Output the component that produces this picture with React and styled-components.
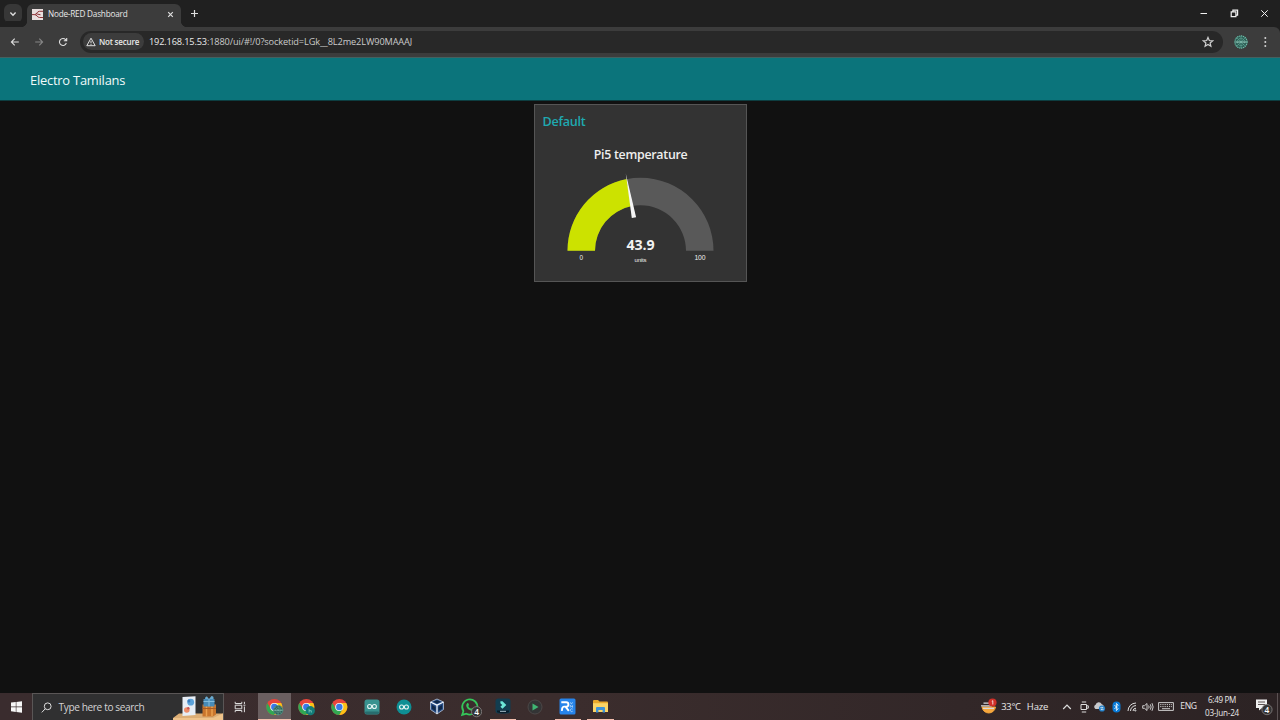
import React from 'react';
import styled, { createGlobalStyle } from 'styled-components';

const Global = createGlobalStyle`
  * { box-sizing: border-box; }
  html, body { margin: 0; background: #111; overflow: hidden; }
  body { font-family: "Open Sans", "Noto Sans", sans-serif; color: #e6e6e6; }
  svg { display: block; flex: none; }
`;

const Screen = styled.div`
  width: 1280px;
  height: 720px;
  display: flex;
  flex-direction: column;
  background: #111111;
`;

const Label = styled.span`
  font-size: ${p => p.$size || 9}px;
  font-weight: ${p => p.$weight || 400};
  letter-spacing: ${p => p.$track || 0}px;
  color: ${p => p.$color || '#e8e8e8'};
  line-height: 1.2;
  white-space: pre;
`;

/* Browser chrome */
const TabStrip = styled.div`
  height: 27px;
  flex: none;
  display: flex;
  align-items: flex-start;
  background: #202020;
`;
const TabSearch = styled.div`
  width: 18px;
  height: 19px;
  margin: 4px 5px 0 4px;
  border-radius: 6px;
  background: #373737;
  display: grid;
  place-items: center;
`;
const Tab = styled.div`
  position: relative;
  width: 154px;
  height: 23px;
  margin-top: 4px;
  padding: 0 7px 3px 5px;
  border-radius: 6px 6px 0 0;
  background: #3c3c3c;
  display: flex;
  align-items: center;
  gap: 5px;
  &::before, &::after {
    content: "";
    position: absolute;
    bottom: 0;
    width: 5px;
    height: 5px;
  }
  &::before { left: -5px; background: radial-gradient(circle at 0 0, transparent 4.6px, #3c3c3c 5px); }
  &::after { right: -5px; background: radial-gradient(circle at 100% 0, transparent 4.6px, #3c3c3c 5px); }
`;
const TabTitle = styled(Label)`
  flex: 1;
`;
const NewTab = styled.div`
  margin: 9px 0 0 9px;
`;
const WindowControls = styled.div`
  margin: 9px 11px 0 auto;
  display: flex;
  gap: 21.5px;
`;
const Toolbar = styled.div`
  height: 31px;
  flex: none;
  display: flex;
  align-items: center;
  padding: 0 10px 1px 10px;
  background: #3c3c3c;
  border-bottom: 1px solid #45605f;
  border-top-right-radius: 6px;
  box-shadow: 6px -6px 0 0 #202020;
`;
const ToolbarIcons = styled.div`
  display: flex;
  gap: 14px;
  width: 70px;
`;
const AddressBar = styled.div`
  width: 1144px;
  height: 22px;
  padding: 0 9px 0 3px;
  border-radius: 11px;
  background: #282828;
  display: flex;
  align-items: center;
`;
const Chip = styled.div`
  width: 61px;
  height: 17px;
  padding-left: 3px;
  margin-right: 5px;
  border-radius: 9px;
  background: #3c3c3c;
  display: flex;
  align-items: center;
  gap: 3px;
`;
const Url = styled.div`
  flex: 1;
  display: flex;
  align-items: center;
`;
const ToolbarEnd = styled.div`
  display: flex;
  align-items: center;
  margin-left: 11px;
  gap: 12px;
`;

/* Dashboard */
const Header = styled.header`
  height: 42px;
  flex: none;
  padding: 4px 0 0 30px;
  display: flex;
  align-items: center;
  background: #0b747b;
`;
const Main = styled.main`
  flex: 1;
  display: flex;
  justify-content: center;
  align-items: flex-start;
  padding: 4px 0 0 1px;
  border-top: 1px solid #0d3d40;
  background: #111111;
`;
const Card = styled.section`
  width: 213px;
  height: 178px;
  margin-top: -1px;
  border: 1px solid #555555;
  background: #333333;
`;
const CardTitle = styled.h2`
  margin: 0;
  height: 32px;
  padding: 8px 0 0 7.5px;
  font-size: 12.6px;
  line-height: 17px;
  font-weight: 600;
  letter-spacing: -0.25px;
  color: #1fa9b0;
`;

/* Taskbar */
const Taskbar = styled.footer`
  height: 27px;
  flex: none;
  display: flex;
  align-items: center;
  background: linear-gradient(90deg, #3a2c2e 0%, #3b2d2d 45%, #322728 75%, #2c2324 100%);
`;
const Slot = styled.div`
  width: ${p => p.$w}px;
  height: 27px;
  flex: none;
  display: flex;
  align-items: center;
  justify-content: center;
`;
const SearchBox = styled.div`
  width: 192px;
  height: 27px;
  flex: none;
  padding-left: 8px;
  border: 1px solid #5a5656;
  border-bottom: 0;
  background: #303031;
  display: flex;
  align-items: center;
  gap: 6.5px;
`;
const SearchText = styled(Label)`
  flex: 1;
`;
const TaskViewSlot = styled(Slot)`
  padding-right: 2px;
`;
const AppSlot = styled(Slot)`
  position: relative;
  background: ${p => (p.$active ? '#6a5f60' : 'transparent')};
  &::after {
    content: "";
    display: ${p => (p.$running ? 'block' : 'none')};
    position: absolute;
    bottom: 0;
    left: ${p => (p.$active ? 0 : 3)}px;
    right: ${p => (p.$active ? 0 : 3)}px;
    height: 1.5px;
    background: #f3bfae;
  }
`;
const Tray = styled.div`
  margin-left: auto;
  display: flex;
  align-items: center;
`;
const Clock = styled(Slot)`
  flex-direction: column;
  gap: 3px;
`;
const Divider = styled.div`
  width: 1px;
  height: 27px;
  margin-right: 2px;
  background: #5b5253;
`;

const Stroke = ({ w = 10, h = w, box = `0 0 ${w} ${h}`, color = '#dedede', sw = 1.1, children }) => (
  <svg width={w} height={h} viewBox={box} fill="none" stroke={color} strokeWidth={sw}>{children}</svg>
);

const Gauge = () => (
  <svg width="211" height="144" viewBox="535 137 211 144" fontFamily='"Open Sans", "Noto Sans", sans-serif' textAnchor="middle">
    <text x="640.7" y="159.4" fontSize="12.4" fontWeight="600" fill="#eeeeee" textLength="94">Pi5 temperature</text>
    <path d="M567.5 250.8A73 73 0 0 1 713.5 250.8H686A45.5 45.5 0 0 0 595 250.8Z" fill="#595959" />
    <path d="M567.5 250.8A73 73 0 0 1 626.6 179.1L631.8 206.1A45.5 45.5 0 0 0 595 250.8Z" fill="#cce200" />
    <path d="M625.8 173.5L631.8 218.1L636.1 217.3Z" fill="#f5f5f5" />
    <text x="640.5" y="249.5" fontSize="14.2" fontWeight="700" fill="#f2f2f2" textLength="28">43.9</text>
    <g fontFamily='"Liberation Sans", Arial, sans-serif' fill="#eeeeee">
      <text x="640.5" y="261.6" fontSize="6" textLength="12">units</text>
      <text x="581.4" y="260.3" fontSize="6.4">0</text>
      <text x="700" y="260.3" fontSize="6.8" textLength="11">100</text>
    </g>
  </svg>
);

const Mesh = ({ r }) => (
  <g transform={`scale(${r / 7})`}>
    <circle cx="7" cy="7" r="6.6" fill="#2f5e56" />
    <circle cx="7" cy="7" r="6.1" fill="none" stroke="#72bda9" strokeWidth="1.1" strokeDasharray="1.3 .7" />
    <circle cx="7" cy="7" r="3.6" fill="none" stroke="#66ad9a" strokeWidth="1" strokeDasharray="1.2 .8" />
    <path d="M7 1V13M2.8 2.8L11.2 11.2M11.2 2.8L2.8 11.2" stroke="#5fa997" strokeWidth=".6" />
    <path d="M1.5 7H12.5" stroke="#9bd0c1" strokeWidth="1" />
  </g>
);

const ChromeIcon = ({ badge }) => (
  <svg width="19" height="18" viewBox="0 0 19 18">
    <circle cx="9.3" cy="9" r="8" fill="#e8453c" />
    <path d="M2.37 5A8 8 0 0 0 9.3 17L12.8 11 9.3 9 5.8 11Z" fill="#32a852" />
    <path d="M9.3 5H16.23A8 8 0 0 1 9.3 17L12.8 11Z" fill="#fbc116" />
    <circle cx="9.3" cy="9" r="4.1" fill="#f5f5f5" />
    <circle cx="9.3" cy="9" r="3.2" fill="#3979e8" />
    {badge === 'mesh' && <g transform="translate(8 7)"><Mesh r={5.2} /></g>}
    {badge === 'dot' && <g><circle cx="13.3" cy="12.7" r="4.6" fill="#137c78" /><path d="M12.1 10.8V14.6M12.1 12.7H14.3V14.6" stroke="#8fd6cb" strokeWidth=".7" fill="none" /></g>}
  </svg>
);

const Infinity8 = ({ cx, cy }) => (
  <g fill="none" stroke="#e4f3f2" strokeWidth="1.1">
    <circle cx={cx - 2.4} cy={cy} r="2" />
    <circle cx={cx + 2.4} cy={cy} r="2" />
  </g>
);

const CountBadge = ({ cx, cy, r = 5.2, n = '4' }) => (
  <g>
    <circle cx={cx} cy={cy} r={r} fill="#343434" stroke="#8a8585" strokeWidth=".8" />
    <text x={cx} y={cy + 3} textAnchor="middle" fontSize="8.4" fontWeight="600" fill="#fff">{n}</text>
  </g>
);

const WhatsApp = () => (
  <svg width="24" height="22" viewBox="1 0 24 22">
    <path d="M5.1 18.9L6.4 15A7.6 7.6 0 1 1 9.4 17.7Z" fill="none" stroke="#35c65a" strokeWidth="1.7" />
    <path d="M10.2 7.3C10.7 6.9 11.3 7.1 11.5 7.6L12 8.9 11.3 9.9C11.8 11.2 12.8 12.1 14.2 12.7L15.2 11.8 16.8 12.6C16.9 14.2 15.5 14.9 14.3 14.7 11.2 14.1 8.9 11.4 9.3 8.8Z" fill="#35c65a" />
    <CountBadge cx={19.6} cy={15.7} r={5.1} />
  </svg>
);

const apps = [
  { id: 'chrome-a', active: true, running: true, icon: <ChromeIcon badge="mesh" /> },
  { id: 'chrome-b', icon: <ChromeIcon badge="dot" /> },
  { id: 'chrome-c', icon: <ChromeIcon /> },
  { id: 'arduino-a', icon: <svg width="16" height="16"><rect x=".5" y=".5" width="15" height="15" rx="2.5" fill="#39928f" /><rect x="1" y="12.5" width="14" height="2.5" rx="1" fill="#286d6e" /><Infinity8 cx={8} cy={7.5} /></svg> },
  { id: 'arduino-b', icon: <svg width="16" height="16"><circle cx="8" cy="8" r="7.5" fill="#0e8f94" /><Infinity8 cx={8} cy={8} /></svg> },
  { id: 'vbox', icon: (
    <svg width="16" height="17" viewBox="0 0 16 17">
      <path d="M8 1L14.5 4V11.5L8 16 1.5 11.5V4Z" fill="#254a83" stroke="#b6c6dc" strokeWidth=".8" />
      <path d="M1.5 4L8 7.2 14.5 4M8 7.2V16" stroke="#edf3fa" strokeWidth="1.3" fill="none" />
      <path d="M4.4 3.8L8 2.2 11.6 3.8 8 5.5Z" fill="#102848" />
      <path d="M3 7L6.5 9V13L3 10.7ZM13 7L9.5 9V13L13 10.7Z" fill="#102848" />
    </svg>
  ) },
  { id: 'whatsapp', wide: true, icon: <WhatsApp /> },
  { id: 'filmora', running: true, icon: (
    <svg width="16" height="17" viewBox="0 0 16 17">
      <rect x=".5" y=".5" width="15" height="15" rx="3" fill="#123d50" />
      <path d="M5.4 3.2L7.5 3.2 11.3 7 7.5 10.8 5.4 8.8 7.2 7 5.4 5.2Z" fill="#6ce7d8" />
      <path d="M2 12.5H14V14.2Q8 16.5 2 14.2Z" fill="#071c29" /><path d="M5 13.4H11" stroke="#8aa3ad" strokeWidth="1.2" />
    </svg>
  ) },
  { id: 'player', icon: <svg width="16" height="16"><circle cx="8" cy="8" r="7" fill="#333435" stroke="#4c4747" /><path d="M5.5 4.5L11.5 8 5.5 11.5Z" fill="#3fb573" /></svg> },
  { id: 'remote', running: true, icon: (
    <svg width="17" height="17" viewBox="0 0 17 17">
      <rect x=".5" y=".5" width="16" height="16" rx="1.5" fill="#2684ea" />
      <path d="M2.3 4.2H7.2A2.2 2.2 0 0 1 7.2 8.6H5Q2.8 8.8 3 12.9M6.5 8.6L9.8 12.8" stroke="#fff" strokeWidth="1.9" fill="none" />
      <path d="M11.3 4.3L12.4 6.2 13.5 4.3M11.3 9.5V7.3L13.5 9.3V7.3M13.7 11.2A1.4 1.4 0 1 0 13.7 13.2" stroke="#b9dafa" strokeWidth=".8" fill="none" />
    </svg>
  ) },
  { id: 'files', running: true, icon: (
    <svg width="17" height="15" viewBox="0 0 17 15">
      <path d="M1 2.2Q1 1 2 1H6L7.5 2.5H15Q16 2.5 16 3.5V12.5H1Z" fill="#e9a92c" />
      <path d="M1 4.2H16V13H1Z" fill="#fbd566" />
      <path d="M4 13.5V9Q4 8 5 8H12Q13 8 13 9V13.5H10.6V11H6.4V13.5Z" fill="#3e94d8" />
    </svg>
  ) },
];

const SearchArt = () => (
  <svg width="50" height="26" viewBox="0 0 50 26">
    <path d="M0 24L6 19.5H50V26H0Z" fill="#dcae76" />
    <path d="M0 24H40L50 19.5V26H0Z" fill="#efc38b" />
    <path d="M9.5 3L22.5 2.3V21L9.5 22Z" fill="#e6edf5" />
    <circle cx="17.7" cy="8.2" r="3.4" fill="#5ba3db" /><circle cx="15.9" cy="7" r="1.5" fill="#397bbb" />
    <circle cx="13.8" cy="16" r="2.8" fill="#ec8c67" /><circle cx="15.3" cy="14.3" r="1.2" fill="#c65256" />
    <path d="M29.5 10.5H43V20.5L40 22.5H29.5Z" fill="#c9752c" /><path d="M33.5 10.5V22.5M39 10.5V22" stroke="#eba04e" strokeWidth="1.5" />
    <path d="M30.5 5H41.5V12.5H30.5Z" fill="#478bb8" /><path d="M36 5V12.5M30.5 7.5H41.5" stroke="#84bddd" strokeWidth="1" />
    <path d="M32 5Q32 2 34 2.5L36 5 38.5 2Q41 2 40.5 5Z" fill="#6babcf" />
    <path d="M29.5 14.5H43" stroke="#a65b24" strokeWidth="1" />
  </svg>
);

const Chrome = () => (
  <>
    <TabStrip>
      <TabSearch><Stroke w={8} sw={1.4}><path d="M1.4 2.6L4 5.2 6.6 2.6" /></Stroke></TabSearch>
      <Tab>
        <svg width="11" height="11" viewBox="0 0 11 11">
          <rect width="11" height="11" fill="#e9dfdf" />
          <path d="M0 5.6H2.5C5 5.6 4.8 2.3 7.5 2.3H11M2.5 5.6C5 5.6 5.2 8.5 7.6 8.5H11M4.2 4.8L8.5 5.8" stroke="#8f3338" strokeWidth="1" fill="none" />
        </svg>
        <TabTitle $size={8.2} $track={-0.21}>Node-RED Dashboard</TabTitle>
        <Stroke w={7} sw={1.2}><path d="M1.2 1.2L5.8 5.8M5.8 1.2L1.2 5.8" /></Stroke>
      </Tab>
      <NewTab><Stroke w={9} sw={1.2}><path d="M4.5 1V8M1 4.5H8" /></Stroke></NewTab>
      <WindowControls>
        <Stroke w={9} sw={1} color="#f2f2f2"><path d="M1.5 4.5H8" /></Stroke>
        <Stroke w={9} sw={1.2} color="#f2f2f2"><path d="M1.2 2.8H5.9V7.6H1.2ZM2.9 2.5V1.2H7.6V6.2H6" /></Stroke>
        <Stroke w={9} sw={1} color="#f2f2f2"><path d="M1.3 1.3L7.7 7.7M7.7 1.3L1.3 7.7" /></Stroke>
      </WindowControls>
    </TabStrip>
    <Toolbar>
      <ToolbarIcons>
        <Stroke><path d="M8.8 5H1.7M4.7 1.7L1.4 5 4.7 8.3" /></Stroke>
        <Stroke color="#868686"><path d="M1.2 5H8.3M5.3 1.7L8.6 5 5.3 8.3" /></Stroke>
        <Stroke><path d="M8.3 6A3.5 3.5 0 1 1 7.6 2.7L8.5 3.6M8.7 1V3.8H5.8" /></Stroke>
      </ToolbarIcons>
      <AddressBar>
        <Chip>
          <Stroke sw={1}><path d="M5 1.2L9.2 8.7H.8ZM5 3.8V6.2M5 6.9V7.8" /></Stroke>
          <Label $size={8} $weight={600} $track={-0.18}>Not secure</Label>
        </Chip>
        <Url>
          <Label $size={9.2} $track={-0.14} $color="#ececec">192.168.15.53</Label>
          <Label $size={9.2} $track={-0.12} $color="#cacaca">:1880/ui/#!/0?socketid=LGk__8L2me2LW90MAAAJ</Label>
        </Url>
        <Stroke w={12} sw={1.2} color="#d0d0d0"><path d="M6 1.4L7.3 4.5 10.7 4.8 8.1 7 8.9 10.3 6 8.5 3.1 10.3 3.9 7 1.3 4.8 4.7 4.5Z" /></Stroke>
      </AddressBar>
      <ToolbarEnd>
        <svg width="14" height="14"><Mesh r={7} /></svg>
        <svg width="10" height="12" fill="#d4d4d4"><circle cx="5.3" cy="2" r="1" /><circle cx="5.3" cy="6" r="1" /><circle cx="5.3" cy="10" r="1" /></svg>
      </ToolbarEnd>
    </Toolbar>
  </>
);

const TaskbarView = () => (
  <Taskbar>
    <Slot $w={32}>
      <svg width="11" height="12" viewBox="0 0 11 12" fill="#f7f7f7"><path d="M0 1.6L4.8 1V5.6H0ZM5.4 .9L11 .2V5.6H5.4ZM0 6.2H4.8V10.9L0 10.2ZM5.4 6.2H11V11.8L5.4 11Z" /></svg>
    </Slot>
    <SearchBox>
      <Stroke w={11} sw={1}><circle cx="6.7" cy="4.3" r="3.4" /><path d="M4.3 6.7L.8 10.4" /></Stroke>
      <SearchText $size={10.1} $track={-0.37} $color="#d4d4d4">Type here to search</SearchText>
      <SearchArt />
    </SearchBox>
    <TaskViewSlot $w={34}>
      <Stroke w={12} sw={1}><path d="M1.2 .8V2.5H7.8V.8M1.2 11.2V9.5H7.8V11.2M1.2 4.2H7.8V7.8H1.2ZM10.4 .8V3M10.4 5.5V11.2M9.4 4.2H11.4" /></Stroke>
    </TaskViewSlot>
    {apps.map(a => <AppSlot key={a.id} $w={a.wide ? 33.5 : 32.5} $active={a.active} $running={a.running}>{a.icon}</AppSlot>)}
    <Tray>
      <Slot $w={18}>
        <svg width="17" height="17" viewBox="0 0 17 17">
          <path d="M2 9H15.5A6.8 6.8 0 0 1 2 9Z" fill="#f5a63c" stroke="#f5a63c" />
          <path d="M3.5 5.2H10M1 7.8H12M3 10.3H14" stroke="#d8d9dc" strokeWidth="1.2" />
          <circle cx="12.5" cy="4.5" r="4.1" fill="#cf3029" /><path d="M11.8 3.4L12.8 2.7V6.5" stroke="#fff" strokeWidth=".8" fill="none" />
        </svg>
      </Slot>
      <Slot $w={28}><Label $size={9.4} $track={-0.3}>33°C</Label></Slot>
      <Slot $w={25}><Label $size={9.5} $track={-0.2}>Haze</Label></Slot>
      <Slot $w={34}><Stroke w={10} sw={1.2}><path d="M1.2 7L5 3.2 8.8 7" /></Stroke></Slot>
      <Slot $w={0}><Stroke w={9} h={12} sw={1}><path d="M1 3.5H6.5V8.5H1ZM6.5 4.8H8.3V7.2H6.5M1.8 1H6.2M1.8 11H6.2" /></Stroke></Slot>
      <Slot $w={31}>
        <svg width="13" height="11" viewBox="0 0 13 11"><path d="M2.5 8A2.3 2.3 0 0 1 2.6 3.8 3.3 3.3 0 0 1 8.8 3.3 2.5 2.5 0 0 1 9.5 8Z" fill="#c7c9cc" /><circle cx="9" cy="7.5" r="3.1" fill="#2481c9" /><path d="M7.3 6.7H10L9.2 5.8M10.6 8.3H8L8.8 9.2" stroke="#fff" strokeWidth=".7" fill="none" /></svg>
      </Slot>
      <Slot $w={2}>
        <svg width="9" height="12" viewBox="0 0 9 12"><rect x=".5" y=".5" width="8" height="11" rx="4" fill="#087ad7" /><path d="M2.4 4L6.2 7.8 4.4 9.6V2.4L6.2 4.2 2.4 8" stroke="#fff" strokeWidth=".8" fill="none" /></svg>
      </Slot>
      <Slot $w={30}><Stroke w={10} sw={1}><path d="M1 9A8 8 0 0 1 9 1M3.5 9A5.5 5.5 0 0 1 9 3.6M6 9A3 3 0 0 1 9 6.2" /><circle cx="8.3" cy="8.5" r=".6" /></Stroke></Slot>
      <Slot $w={1}><Stroke w={12} h={10} sw={.9}><path d="M.7 3.7H2.5L5 1.5V8.5L2.5 6.3H.7ZM6.6 3.5Q7.7 5 6.6 6.5M8.3 2.3Q10 5 8.3 7.7M10 1.2Q12.3 5 10 8.8" /></Stroke></Slot>
      <Slot $w={35}><Stroke w={16} h={9} sw={.9}><path d="M.6.6H15.4V8.4H.6ZM4 6.7H12" /><path d="M2.2 2.6H14M2.2 4.6H14" strokeDasharray="1.2 1" /></Stroke></Slot>
      <Slot $w={11}><Label $size={8.6} $track={-0.35}>ENG</Label></Slot>
      <Clock $w={56}>
        <Label $size={8.1} $track={-0.35}>6:49 PM</Label>
        <Label $size={8.1} $track={-0.2}>03-Jun-24</Label>
      </Clock>
      <Slot $w={27}>
        <svg width="20" height="18" viewBox="0 0 20 18"><path d="M2 1.5H13V10H8L5 12.5V10H2Z" fill="#f0f0f0" /><path d="M4 4H11M4 6.5H11" stroke="#4a3f40" strokeWidth=".9" /><CountBadge cx={13} cy={11.6} r={5.1} /></svg>
      </Slot>
      <Divider />
    </Tray>
  </Taskbar>
);

export default function App() {
  return (
    <Screen>
      <Global />
      <Chrome />
      <Header><Label $size={12.9} $track={-0.22} $color="#f0fafa">Electro Tamilans</Label></Header>
      <Main>
        <Card>
          <CardTitle>Default</CardTitle>
          <Gauge />
        </Card>
      </Main>
      <TaskbarView />
    </Screen>
  );
}
